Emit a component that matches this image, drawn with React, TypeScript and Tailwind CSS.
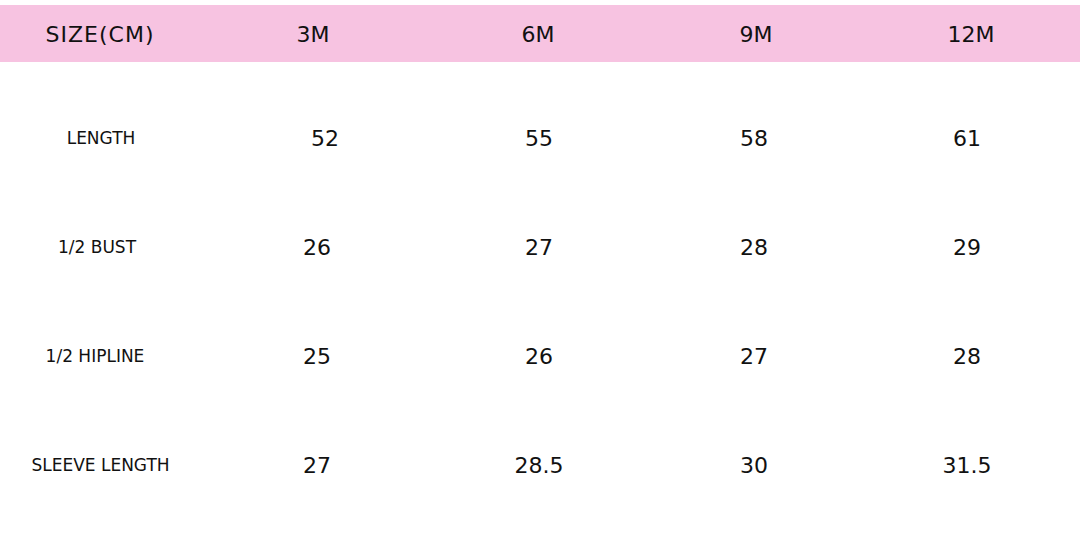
const header = ["SIZE(CM)", "3M", "6M", "9M", "12M"];

const rows: { label: string; shift: string; values: string[]; valueShift?: string[] }[] = [
  { label: "LENGTH", shift: "pl-0.5", values: ["52", "55", "58", "61"], valueShift: ["pl-6", "pl-0.5", "pr-1", "pr-2"] },
  { label: "1/2 BUST", shift: "pr-1.5", values: ["26", "27", "28", "29"] },
  { label: "1/2 HIPLINE", shift: "pr-2.5", values: ["25", "26", "27", "28"] },
  { label: "SLEEVE LENGTH", shift: "pl-px", values: ["27", "28.5", "30", "31.5"] },
];

const cols = "grid grid-cols-[200px_226px_224px_212px_218px]";
const defaultShift = ["pl-2", "pl-0.5", "pr-1", "pr-2"];

export default function App() {
  return (
    <div className="h-[550px] w-[1080px] bg-white pt-[5px] font-['DejaVu_Sans',Verdana,sans-serif] text-[#111]">
      <div className={`${cols} h-[57px] items-center bg-[#f7c3e1] pt-0.5 text-[22px]`}>
        {header.map((h, i) => (
          <div key={h} className={`text-center ${i === 0 ? "tracking-[1px]" : ""}`}>
            {h}
          </div>
        ))}
      </div>
      <div className="pt-[22px]">
        {rows.map((r) => (
          <div key={r.label} className={`${cols} h-[109px] items-center`}>
            <div className={`text-center text-[17px] ${r.shift}`}>{r.label}</div>
            {r.values.map((v, i) => (
              <div key={i} className={`text-center text-[22px] ${(r.valueShift ?? defaultShift)[i]}`}>
                {v}
              </div>
            ))}
          </div>
        ))}
      </div>
    </div>
  );
}
